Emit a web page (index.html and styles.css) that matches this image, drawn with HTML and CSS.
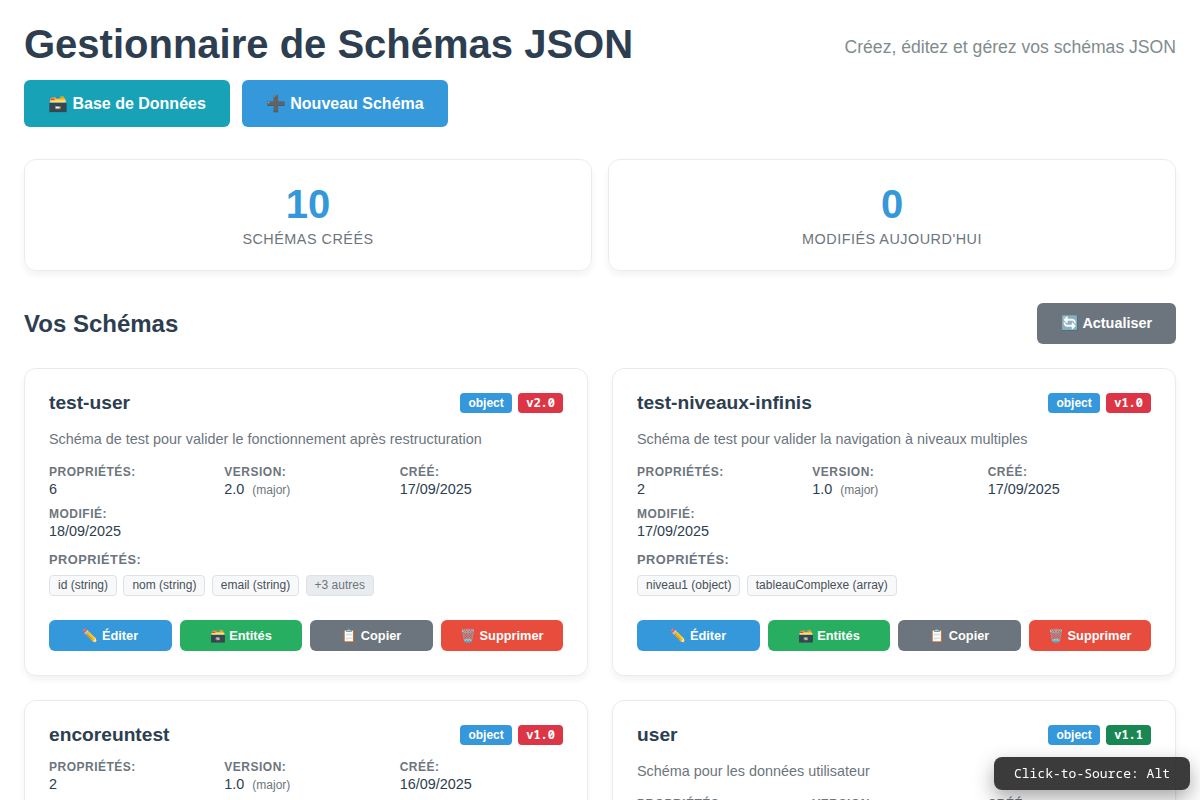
FILE: index.html
```html
<!DOCTYPE html>
<html lang="fr">
<head>
<meta charset="utf-8">
<title>Gestionnaire de Schémas JSON</title>
<link rel="stylesheet" href="styles.css">
</head>
<body>
<main class="page">
  <header class="header">
    <h1>Gestionnaire de Schémas JSON</h1>
    <p class="subtitle">Créez, éditez et gérez vos schémas JSON</p>
  </header>
  <div class="actions">
    <button class="btn teal">🗃️ Base de Données</button>
    <button class="btn blue">➕ Nouveau Schéma</button>
  </div>
  <section class="stats">
    <div class="stat"><div class="num">10</div><div class="label">Schémas créés</div></div>
    <div class="stat"><div class="num">0</div><div class="label">Modifiés aujourd'hui</div></div>
  </section>
  <div class="list-head">
    <h2>Vos Schémas</h2>
    <button class="btn gray refresh">🔄 Actualiser</button>
  </div>
  <section class="grid">
    <article class="card">
      <div class="card-head"><h3>test-user</h3><div class="badges"><span class="badge">object</span><span class="badge ver major">v2.0</span></div></div>
      <p class="desc">Schéma de test pour valider le fonctionnement après restructuration</p>
      <div class="meta">
        <div><b>Propriétés:</b><span>6</span></div>
        <div><b>Version:</b><span>2.0 <small>(major)</small></span></div>
        <div><b>Créé:</b><span>17/09/2025</span></div>
        <div><b>Modifié:</b><span>18/09/2025</span></div>
      </div>
      <div class="props-title">Propriétés:</div>
      <div class="tags"><span class="tag">id (string)</span><span class="tag">nom (string)</span><span class="tag">email (string)</span><span class="tag more">+3 autres</span></div>
      <div class="card-actions"><button class="blue">✏️ Éditer</button><button class="green">🗃️ Entités</button><button class="gray">📋 Copier</button><button class="red">🗑️ Supprimer</button></div>
    </article>
    <article class="card">
      <div class="card-head"><h3>test-niveaux-infinis</h3><div class="badges"><span class="badge">object</span><span class="badge ver major">v1.0</span></div></div>
      <p class="desc">Schéma de test pour valider la navigation à niveaux multiples</p>
      <div class="meta">
        <div><b>Propriétés:</b><span>2</span></div>
        <div><b>Version:</b><span>1.0 <small>(major)</small></span></div>
        <div><b>Créé:</b><span>17/09/2025</span></div>
        <div><b>Modifié:</b><span>17/09/2025</span></div>
      </div>
      <div class="props-title">Propriétés:</div>
      <div class="tags"><span class="tag">niveau1 (object)</span><span class="tag">tableauComplexe (array)</span></div>
      <div class="card-actions"><button class="blue">✏️ Éditer</button><button class="green">🗃️ Entités</button><button class="gray">📋 Copier</button><button class="red">🗑️ Supprimer</button></div>
    </article>
    <article class="card">
      <div class="card-head"><h3>encoreuntest</h3><div class="badges"><span class="badge">object</span><span class="badge ver major">v1.0</span></div></div>
      <div class="meta">
        <div><b>Propriétés:</b><span>2</span></div>
        <div><b>Version:</b><span>1.0 <small>(major)</small></span></div>
        <div><b>Créé:</b><span>16/09/2025</span></div>
      </div>
    </article>
    <article class="card">
      <div class="card-head"><h3>user</h3><div class="badges"><span class="badge">object</span><span class="badge ver minor">v1.1</span></div></div>
      <p class="desc">Schéma pour les données utilisateur</p>
      <div class="meta">
        <div><b>Propriétés:</b></div>
        <div><b>Version:</b></div>
        <div><b>Créé:</b></div>
      </div>
    </article>
  </section>
</main>
<div class="toast">Click-to-Source: Alt</div>
</body>
</html>
```
FILE: styles.css
```css
* { box-sizing: border-box; margin: 0; padding: 0; }
html, body { height: 800px; overflow: hidden; }
body { background: #fff; color: #2c3e50; font-family: "Liberation Sans", sans-serif; font-size: 16px; }
button { border: 0; color: #fff; font-family: inherit; font-weight: 600; white-space: nowrap; }
.page { height: 800px; overflow: hidden; padding: 20px 24px 0; }
.header { display: flex; justify-content: space-between; align-items: center; height: 48px; }
h1 { font-size: 40px; line-height: 48px; }
.subtitle { font-size: 17.6px; line-height: 20px; color: #7f8c8d; padding-top: 6px; }
.actions { display: flex; gap: 12px; margin-top: 12px; }
.btn { height: 47px; padding: 0 24px; border-radius: 6px; font-size: 16px; }
.teal { background: #17a2b8; }
.blue { background: #3498db; }
.green { background: #27ae60; }
.gray { background: #6c757d; }
.red { background: #e74c3c; }
.stats { display: grid; grid-template-columns: 1fr 1fr; gap: 16px; margin-top: 32px; }
.stat { height: 112px; padding-top: 24px; border: 1px solid #e9ecef; border-radius: 12px; box-shadow: 0 4px 6px rgba(0,0,0,.05); text-align: center; }
.num { font-size: 40px; line-height: 40px; font-weight: 700; color: #3498db; }
.label { margin-top: 6px; font-size: 14.4px; line-height: 18px; letter-spacing: .5px; text-transform: uppercase; color: #6c757d; }
.list-head { display: flex; justify-content: space-between; align-items: center; margin: 32px 0 24px; }
h2 { font-size: 24px; line-height: 28px; }
.refresh { height: 41px; font-size: 14.4px; }
.grid { display: grid; grid-template-columns: 1fr 1fr; gap: 24px; }
.card { height: 308px; padding: 24px; border: 1px solid #e9ecef; border-radius: 12px; box-shadow: 0 4px 6px rgba(0,0,0,.05); background: #fff; }
.card-head { display: flex; justify-content: space-between; align-items: center; height: 20px; margin-bottom: 15px; }
h3 { font-size: 19.2px; line-height: 20px; }
.badges { display: flex; gap: 6.4px; }
.badge { height: 20px; padding: 0 8px; border-radius: 4px; background: #3498db; color: #fff; font-size: 12px; line-height: 20px; font-weight: 600; }
.ver { font-family: "Noto Sans Mono", monospace; font-weight: 700; }
.major { background: #dc3545; }
.minor { background: #198754; }
.desc { height: 21px; padding-top: 1px; margin-bottom: 16px; font-size: 14.4px; line-height: 20px; color: #6c757d; }
.meta { display: grid; grid-template-columns: repeat(3, 1fr); gap: 8px 12px; }
.meta div { display: flex; flex-direction: column; gap: 2px; height: 34px; font-size: 14.4px; line-height: 17px; }
.meta b { font-size: 12px; line-height: 14px; letter-spacing: .5px; text-transform: uppercase; color: #6c757d; }
.meta small { margin-left: 4px; font-size: 12px; color: #6c757d; }
.props-title { margin-top: 11px; font-size: 12.8px; line-height: 15px; letter-spacing: .5px; font-weight: 600; text-transform: uppercase; color: #6c757d; }
.tags { display: flex; gap: 6.4px; margin-top: 8px; }
.tag { height: 21px; padding: 0 8px; border: 1px solid #dee2e6; border-radius: 4px; background: #f8f9fa; color: #495057; font-size: 12px; line-height: 19px; }
.more { background: #e9ecef; color: #6c757d; }
.card-actions { display: grid; grid-template-columns: repeat(4, 1fr); gap: 8px; margin-top: 24px; }
.card-actions button { height: 31px; border-radius: 6px; font-size: 12.8px; }
.toast { position: fixed; right: 10px; bottom: 10px; height: 33px; padding: 0 20px; border-radius: 8px; background: rgba(30,30,30,.87); color: #fff; font: 13px/33px "Noto Sans Mono", monospace; box-shadow: 0 8px 20px rgba(0,0,0,.35); }
```
